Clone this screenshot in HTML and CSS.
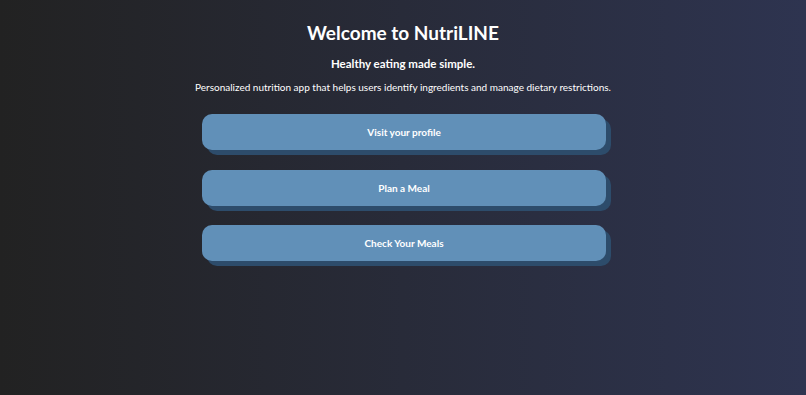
FILE: index.html
```html
<!DOCTYPE html>
<html lang="en">
<head>
  <meta charset="UTF-8" />
  <meta name="viewport" content="width=device-width, initial-scale=1.0"/>
  <title>NutriLINE</title>
  <link rel="stylesheet" href="styles.css">
</head>
<body>
  <div class="container">
    <h1>Welcome to NutriLINE</h1>
    <p class="tagline">Healthy eating made simple.</p>
    <p class="intro">Personalized nutrition app that helps users identify ingredients and manage dietary restrictions.</p>
    <div class="menu">
      <button class="menu-btn">Visit your profile</button>
      <button class="menu-btn">Plan a Meal</button>
      <button class="menu-btn">Check Your Meals</button>
    </div>
  </div>
</body>
</html>
```

FILE: styles.css
```css
html, body {
  height: 100%;
}

body {
  margin: 0;
  font-family: "Century Gothic", "URW Gothic", Lato, sans-serif;
  color: #ffffff;
  background: linear-gradient(90deg, #222222, #2e3450);
  text-align: center;
}

.container {
  padding-top: 21px;
}

h1 {
  margin: 0;
  font-size: 19px;
  font-weight: bold;
  line-height: 24px;
}

.tagline {
  margin: 11px 0 0;
  font-size: 11.5px;
  font-weight: bold;
  line-height: 16px;
}

.intro {
  margin: 8px 0 0;
  font-size: 10px;
  line-height: 14px;
}

.menu {
  width: 404px;
  margin: 20px auto 0;
  padding-left: 2px;
  display: flex;
  flex-direction: column;
  gap: 19.5px;
}

.menu-btn {
  height: 36px;
  border: none;
  border-radius: 10px;
  background: #6190b8;
  box-shadow: 5px 5px 0 #2d4c6b;
  color: #ffffff;
  font-family: inherit;
  font-size: 10px;
  font-weight: bold;
  cursor: pointer;
}

.menu-btn:hover {
  background: #5683ab;
}
```
